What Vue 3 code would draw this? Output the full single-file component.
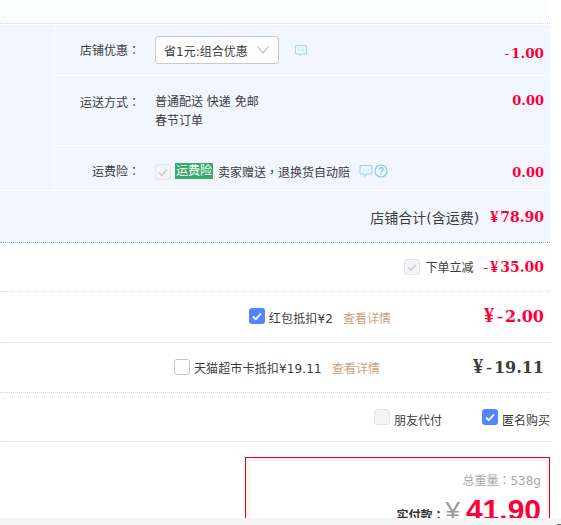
<script setup>
const checkPath = 'M4 8.5l2.800 2.800L12 5.500'
</script>

<template>
  <div class="page">
    <div class="top"></div>

    <section class="shop">
      <div class="shop-side"></div>
      <div class="shop-rows">
        <div class="row row-coupon">
          <span class="label">店铺优惠<span class="punct">：</span></span>
          <div class="select">
            <span>省1元:组合优惠</span>
            <svg class="chev" width="12" height="8" viewBox="0 0 12 8"><path d="M.5.500l5.500 6.500L11.500.500" fill="none" stroke="#a3a3a3" stroke-width="1"/></svg>
          </div>
          <svg class="msg msg-coupon" width="14" height="14" viewBox="0 0 14 14"><path d="M1.500 1.500h11v8.500H8L6 12V10H1.500z" fill="#eaf5fd" stroke="#a5d5f5"/><path d="M4 5.800h1M6.500 5.800h1M9 5.800h1" stroke="#a5d5f5"/></svg>
          <span class="amount"><span class="minus">-</span>1.00</span>
        </div>
        <div class="row row-ship">
          <span class="label">运送方式<span class="punct">：</span></span>
          <div class="ship-text">
            <div>普通配送 快递 免邮</div>
            <div>春节订单</div>
          </div>
          <span class="amount">0.00</span>
        </div>
        <div class="row row-ins">
          <span class="label">运费险<span class="punct">：</span></span>
          <span class="box box-disabled box-ins">
            <svg width="16" height="16" viewBox="0 0 16 16"><path :d="checkPath" fill="none" stroke="#cfcfcf" stroke-width="1.600"/></svg>
          </span>
          <span class="tag">运费险</span>
          <span class="ins-text">卖家赠送<span class="punct">，</span>退换货自动赔</span>
          <svg class="msg msg-ins" width="14" height="14" viewBox="0 0 14 14"><path d="M1 1.500h12v8.500H8L6 12.500V10H1z" fill="#eaf5fd" stroke="#9fd0f3"/><path d="M4 5.800h1M6.500 5.800h1M9 5.800h1" stroke="#9fd0f3"/></svg>
          <svg class="help" width="14" height="14" viewBox="0 0 14 14"><circle cx="7" cy="7" r="6" fill="none" stroke="#8ec6f0" stroke-width="1.200"/><text x="7" y="10.500" text-anchor="middle" class="help-q">?</text></svg>
          <span class="amount">0.00</span>
        </div>
      </div>
    </section>

    <div class="shop-total">
      <span class="total-label">店铺合计(含运费)</span>
      <span class="amount total-amount"><span class="yen-small">¥</span>78.90</span>
    </div>

    <div class="line line-discount">
      <span class="box box-disabled">
        <svg width="16" height="16" viewBox="0 0 16 16"><path :d="checkPath" fill="none" stroke="#cfcfcf" stroke-width="1.600"/></svg>
      </span>
      <span class="line-text discount-text">下单立减</span>
      <span class="amount discount-amount"><span class="minus">-</span><span class="yen-small">¥</span>35.00</span>
    </div>

    <div class="line line-pack">
      <span class="box box-on lift">
        <svg width="16" height="16" viewBox="0 0 16 16"><path :d="checkPath" fill="none" stroke="#fff" stroke-width="1.800"/></svg>
      </span>
      <span class="line-text wide">红包抵扣¥2</span>
      <a class="detail">查看详情</a>
      <span class="big-amount red"><span class="yen-big">¥</span><span class="minus-big">-</span>2.00</span>
    </div>

    <div class="line line-card">
      <span class="box box-off lift"></span>
      <span class="line-text wide">天猫超市卡抵扣¥19.11</span>
      <a class="detail">查看详情</a>
      <span class="big-amount dark"><span class="yen-big">¥</span><span class="minus-big">-</span>19.11</span>
    </div>

    <div class="line line-opts">
      <span class="box box-disabled"></span>
      <span class="line-text opt-text friend">朋友代付</span>
      <span class="box box-on">
        <svg width="16" height="16" viewBox="0 0 16 16"><path :d="checkPath" fill="none" stroke="#fff" stroke-width="1.800"/></svg>
      </span>
      <span class="line-text opt-text">匿名购买</span>
    </div>

    <div class="pay-wrap">
      <div class="pay">
        <div class="pay-inner">
          <div class="weight">总重量<span class="punct">：</span>538g</div>
          <div class="paid">
            <span class="paid-label">实付款<span class="punct">：</span></span>
            <span class="yen">¥</span>
            <span class="paid-num">41.90</span>
          </div>
        </div>
      </div>
    </div>

    <div class="hscroll"><span class="hscroll-tick"></span></div>
  </div>
</template>

<style scoped>
.page {
  position: relative;
  width: 561px;
  height: 525px;
  overflow: hidden;
  background: #fff;
  font-family: "DejaVu Sans", "Noto Sans CJK SC", sans-serif;
  font-size: 12px;
  color: #3c3c3c;
}
.punct {
  font-family: "Noto Sans CJK TC", sans-serif;
}
.minus {
  font-family: "Liberation Serif", serif;
  font-weight: 400;
  margin-right: 2px;
}
.yen-small {
  font-family: "Liberation Serif", serif;
  font-size: 16px;
  margin-right: 2px;
}
.yen-big {
  font-family: "Liberation Serif", serif;
  font-size: 20px;
  margin-right: 3px;
}
.minus-big {
  font-family: "Liberation Serif", serif;
  font-weight: 400;
  font-size: 18px;
  margin-right: 2px;
}
.top {
  width: 550px;
  height: 23px;
  background: #fcfdff;
  border-bottom: 1px dotted #d8d8d8;
  margin-bottom: 1px;
}
.shop {
  display: flex;
  width: 550px;
  background: #f1f6ff;
  border-bottom: 1px solid #fff;
}
.shop-side {
  width: 54px;
  flex: none;
  border-right: 1px solid #fff;
}
.shop-rows {
  flex: 1;
  min-width: 0;
}
.row {
  display: flex;
  align-items: flex-start;
  padding-right: 6px;
  box-sizing: border-box;
}
.row + .row {
  border-top: 1px solid #fff;
}
.row-coupon {
  height: 50px;
  align-items: center;
}
.row-coupon .label {
  margin-top: 1px;
}
.row-ship {
  height: 70px;
  padding-top: 17px;
}
.row-ins {
  height: 45px;
  padding-top: 16px;
}
.label {
  width: 85px;
  flex: none;
  text-align: right;
  line-height: 18px;
}
.select {
  display: flex;
  align-items: center;
  justify-content: space-between;
  box-sizing: border-box;
  width: 124px;
  height: 28px;
  margin-left: 15px;
  padding: 0 9px 0 8px;
  background: #fff;
  border: 1px solid #c9c9d2;
  border-radius: 3px;
}
.msg-coupon {
  margin-left: 15px;
  margin-top: 2px;
}
.amount {
  margin-left: auto;
  font-family: "DejaVu Serif", serif;
  font-weight: 700;
  font-size: 13px;
  line-height: 18px;
  color: #ff0036;
}
.row-coupon .amount {
  margin-top: 6px;
  font-size: 13.5px;
}
.row-ship .amount {
  margin-top: -1px;
}
.row-ins .amount {
  margin-top: 2px;
}
.ship-text {
  margin-left: 15px;
  line-height: 19px;
}
.box {
  display: inline-flex;
  align-items: center;
  justify-content: center;
  flex: none;
  box-sizing: border-box;
  width: 16px;
  height: 16px;
  border-radius: 3px;
}
.box svg {
  display: block;
}
.box-disabled {
  background: #f3f4f7;
  border: 1px solid #e4e5ea;
}
.box-disabled svg {
  margin: -1px;
}
.box-on {
  background: #5285ff;
}
.box-off {
  background: #fff;
  border: 1px solid #c3c6d2;
}
.lift {
  margin-top: -2px;
}
.box-ins {
  margin-left: 15px;
  margin-top: 2px;
}
.tag {
  margin-left: 4px;
  margin-top: 1px;
  padding: 0 1px;
  line-height: 16px;
  color: #fff;
  background: #38ab6b;
}
.ins-text {
  margin-left: 5px;
  margin-top: 1px;
  line-height: 18px;
}
.msg-ins {
  margin-left: 9px;
  margin-top: 2px;
}
.help {
  margin-top: 2px;
  margin-left: 1px;
}
.help-q {
  font-family: "Liberation Sans", sans-serif;
  font-size: 10px;
  font-weight: 700;
  fill: #8ec6f0;
}
.shop-total {
  display: flex;
  align-items: center;
  justify-content: flex-end;
  width: 550px;
  height: 51px;
  background: #f1f6ff;
  border-bottom: 1px dotted #7fb0f0;
}
.total-label {
  font-size: 14px;
}
.total-amount {
  margin-left: 11px;
  margin-right: 6px;
  font-size: 14px;
}
.line {
  display: flex;
  align-items: center;
  justify-content: flex-end;
  width: 550px;
  box-sizing: border-box;
  border-bottom: 1px dotted #d8d8d8;
}
.line-discount {
  height: 49px;
}
.line-pack {
  height: 51px;
}
.line-card {
  height: 50px;
}
.line-opts {
  height: 49px;
}
.line-text {
  margin-left: 4px;
}
.wide {
  letter-spacing: 0.15px;
}
.discount-text {
  margin-left: 5px;
  margin-top: -1px;
}
.opt-text {
  margin-top: 4px;
}
.discount-amount {
  margin-left: 10px;
  margin-right: 6px;
  font-size: 14px;
}
.detail {
  margin-left: 10px;
  color: #cd9f7a;
}
.big-amount {
  font-family: "DejaVu Serif", serif;
  font-weight: 700;
  font-size: 16px;
  margin-left: 93px;
  margin-right: 6px;
  margin-top: -3px;
}
.red {
  color: #ff0036;
}
.dark {
  color: #3c3c3c;
}
.friend {
  margin-right: 40px;
}
.pay-wrap {
  display: flex;
  justify-content: flex-end;
  width: 550px;
  padding-top: 15px;
}
.pay {
  box-sizing: border-box;
  width: 305px;
  border: 1px solid #e4002b;
}
.pay-inner {
  border: 3px solid #fff0e8;
  padding: 9px 5px 0 0;
  text-align: right;
}
.weight {
  color: #a8a8a8;
  line-height: 20px;
}
.paid {
  display: flex;
  align-items: baseline;
  justify-content: flex-end;
  margin-top: 2px;
}
.paid-label {
  font-weight: 700;
  color: #333;
}
.yen {
  font-family: "Liberation Sans", sans-serif;
  font-size: 26px;
  color: #999;
  margin: 0 6px 0 1px;
}
.paid-num {
  font-family: "Liberation Sans", sans-serif;
  font-weight: 700;
  font-size: 30px;
  line-height: 34px;
  color: #ff0036;
}
.hscroll {
  position: absolute;
  left: 0;
  right: 0;
  bottom: 0;
  height: 7px;
  background: #f5f5f5;
}
.hscroll-tick {
  position: absolute;
  right: 0;
  bottom: 0;
  width: 4px;
  height: 1px;
  background: #777;
}
</style>
